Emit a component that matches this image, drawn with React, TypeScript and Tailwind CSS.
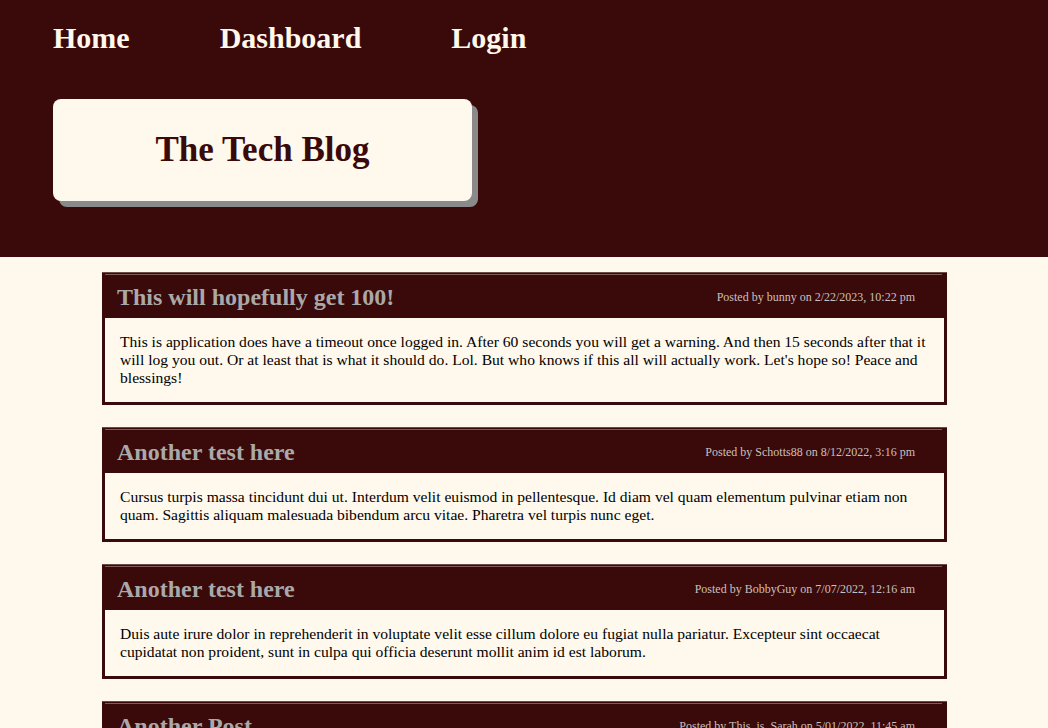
import React from "react";

const posts = [
  {
    title: "This will hopefully get 100!",
    meta: "Posted by bunny on 2/22/2023, 10:22 pm",
    body: "This is application does have a timeout once logged in. After 60 seconds you will get a warning. And then 15 seconds after that it will log you out. Or at least that is what it should do. Lol. But who knows if this all will actually work. Let's hope so! Peace and blessings!",
  },
  {
    title: "Another test here",
    meta: "Posted by Schotts88 on 8/12/2022, 3:16 pm",
    body: "Cursus turpis massa tincidunt dui ut. Interdum velit euismod in pellentesque. Id diam vel quam elementum pulvinar etiam non quam. Sagittis aliquam malesuada bibendum arcu vitae. Pharetra vel turpis nunc eget.",
  },
  {
    title: "Another test here",
    meta: "Posted by BobbyGuy on 7/07/2022, 12:16 am",
    body: "Duis aute irure dolor in reprehenderit in voluptate velit esse cillum dolore eu fugiat nulla pariatur. Excepteur sint occaecat cupidatat non proident, sunt in culpa qui officia deserunt mollit anim id est laborum.",
  },
  {
    title: "Another Post",
    meta: "Posted by This_is_Sarah on 5/01/2022, 11:45 am",
    body: "Lorem ipsum dolor sit amet, consectetur adipiscing elit, sed do eiusmod tempor incididunt ut labore et dolore magna aliqua.",
  },
];

export default function App() {
  return (
    <div
      className="min-h-[728px] bg-[#fff8ec] text-black"
      style={{ fontFamily: '"Liberation Serif", "Times New Roman", serif' }}
    >
      <header className="bg-[#3a0909] h-[257px] pl-[53px] pt-[20px]">
        <nav className="flex gap-[90px] text-[30px] font-bold text-[#fff8ec] leading-[36px]">
          <a>Home</a>
          <a>Dashboard</a>
          <a>Login</a>
        </nav>
        <div className="mt-[43px] w-[419px] h-[102px] rounded-[8px] bg-[#fff8ec] shadow-[6px_6px_0_#8a8a8a] flex items-center justify-center">
          <h1 className="text-[35px] font-bold text-[#3a0909] leading-none pb-[2px]">The Tech Blog</h1>
        </div>
      </header>
      <main className="pt-[15px] pl-[102px] w-[947px] flex flex-col gap-[22px]">
        {posts.map((p, i) => (
          <article key={i} className="border-x-[3px] border-b-[3px] border-[#3a0909]">
            <div className="bg-[#3a0909]">
              <div className="h-px bg-[#6e4a46] -mx-[3px]" />
              <div className="h-px" />
              <div className="h-px bg-[#7e5c58] mr-[2px]" />
              <div className="flex items-center justify-between pl-[12px] pr-[29px] pt-[8px] pb-[7px]">
                <h2 className="text-[24px] font-bold text-[#a9a9a9] leading-[28px]">{p.title}</h2>
                <span className="text-[12px] text-[#c9c0bf] leading-[14px]">{p.meta}</span>
              </div>
            </div>
            <div className="bg-[#fff8ec] pl-[15px] pr-[12px] pt-[15px] pb-[15px] text-[15.6px] leading-[18px]">
              {p.body}
            </div>
          </article>
        ))}
      </main>
    </div>
  );
}
